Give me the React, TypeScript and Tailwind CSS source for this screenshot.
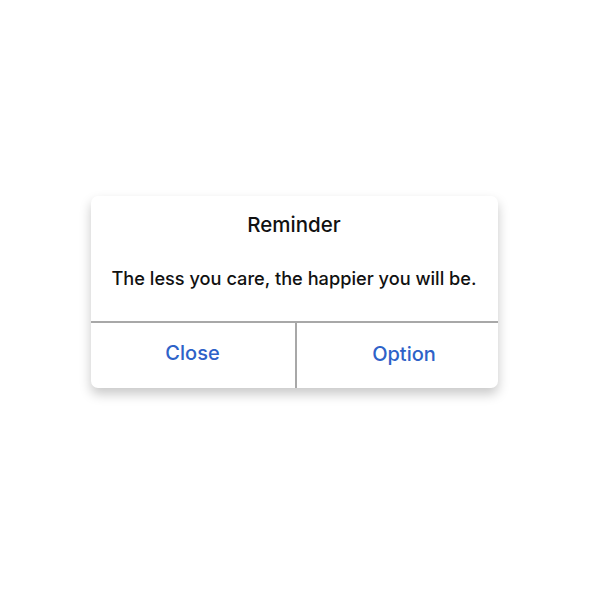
export default function App() {
    return (
        <div className="w-[600px] h-[600px] bg-white flex items-center justify-center" style={{ fontFamily: "Inter, 'Noto Sans', sans-serif" }}>
            <div className="w-[407px] mt-[-17px] ml-[-12px] bg-white rounded-[7px] shadow-[0_6px_12px_rgba(0,0,0,0.22)] overflow-hidden">
                <div className="h-[125px] flex flex-col items-center pt-[17px]">
                    <h2 className="text-[20.5px] leading-[24px] text-[#111] font-medium">Reminder</h2>
                    <p className="mt-[29px] text-[18.2px] leading-[24px] text-[#111] font-medium">The less you care, the happier you will be.</p>
                </div>
                <div className="h-[2px] bg-[#a8a8a8]" />
                <div className="flex h-[65px]">
                    <button className="w-[204px] flex items-center justify-center text-[20px] font-medium text-[#2e62c8] pb-[4px]">Close</button>
                    <div className="w-[2px] bg-[#a8a8a8]" />
                    <button className="flex-1 flex items-center justify-center text-[20px] font-medium text-[#2e62c8] pb-[2px] pl-[14px]">Option</button>
                </div>
            </div>
        </div>
    );
}
